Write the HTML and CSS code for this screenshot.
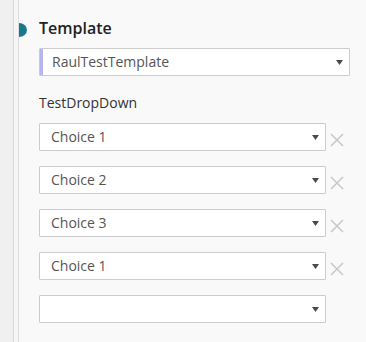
FILE: index.html
```html
<!DOCTYPE html>
<html>
<head>
<meta charset="utf-8">
<link rel="stylesheet" href="styles.css">
</head>
<body>
<div class="page">
  <div class="rail"></div>
  <div class="gutter"></div>
  <div class="panel">
    <span class="marker"></span>
    <h2 class="title">Template</h2>
    <div class="select select-template">
      <span class="accent"></span>
      <span class="value">RaulTestTemplate</span>
      <svg class="caret" width="7" height="5" viewBox="0 0 7 5"><polygon points="0,0 7,0 3.5,5" fill="#4a4a4a"/></svg>
    </div>
    <div class="label">TestDropDown</div>
    <div class="choices">
      <div class="choice-row">
        <div class="select select-choice"><span class="value">Choice 1</span><svg class="caret" width="7" height="5" viewBox="0 0 7 5"><polygon points="0,0 7,0 3.5,5" fill="#4a4a4a"/></svg></div>
        <svg class="remove" width="14" height="14" viewBox="0 0 14 14"><path d="M1 1L13 13M13 1L1 13" stroke="#c9c9c9" stroke-width="1.6" fill="none"/></svg>
      </div>
      <div class="choice-row">
        <div class="select select-choice"><span class="value">Choice 2</span><svg class="caret" width="7" height="5" viewBox="0 0 7 5"><polygon points="0,0 7,0 3.5,5" fill="#4a4a4a"/></svg></div>
        <svg class="remove" width="14" height="14" viewBox="0 0 14 14"><path d="M1 1L13 13M13 1L1 13" stroke="#c9c9c9" stroke-width="1.6" fill="none"/></svg>
      </div>
      <div class="choice-row">
        <div class="select select-choice"><span class="value">Choice 3</span><svg class="caret" width="7" height="5" viewBox="0 0 7 5"><polygon points="0,0 7,0 3.5,5" fill="#4a4a4a"/></svg></div>
        <svg class="remove" width="14" height="14" viewBox="0 0 14 14"><path d="M1 1L13 13M13 1L1 13" stroke="#c9c9c9" stroke-width="1.6" fill="none"/></svg>
      </div>
      <div class="choice-row">
        <div class="select select-choice"><span class="value">Choice 1</span><svg class="caret" width="7" height="5" viewBox="0 0 7 5"><polygon points="0,0 7,0 3.5,5" fill="#4a4a4a"/></svg></div>
        <svg class="remove" width="14" height="14" viewBox="0 0 14 14"><path d="M1 1L13 13M13 1L1 13" stroke="#c9c9c9" stroke-width="1.6" fill="none"/></svg>
      </div>
      <div class="choice-row">
        <div class="select select-choice"><span class="value"></span><svg class="caret" width="7" height="5" viewBox="0 0 7 5"><polygon points="0,0 7,0 3.5,5" fill="#4a4a4a"/></svg></div>
      </div>
    </div>
  </div>
</div>
</body>
</html>
```
FILE: styles.css
```css
html, body {
  margin: 0;
  padding: 0;
}
body {
  background: #f9f9f9;
  font-family: "Open Sans", "Liberation Sans", sans-serif;
}
.page {
  display: flex;
  height: 342px;
  overflow: hidden;
}
.rail {
  width: 13px;
  background: #f0f0f0;
  border-right: 1px solid #d9d9d9;
}
.gutter {
  width: 4px;
  background: #f6f6f6;
  border-right: 1px solid #dcdcdc;
}
.panel {
  position: relative;
  flex: 1;
  padding: 17px 0 0 20px;
  background: #f9f9f9;
}
.marker {
  position: absolute;
  left: 0;
  top: 23px;
  width: 8px;
  height: 14px;
  background: #19798a;
  border-radius: 0 8px 8px 0 / 0 7px 7px 0;
}
.title {
  margin: 0;
  font-size: 16px;
  line-height: 22px;
  font-weight: 600;
  color: #222;
}
.select {
  position: relative;
  display: flex;
  align-items: center;
  box-sizing: border-box;
  height: 28px;
  background: #fff;
  border: 1px solid #cccccc;
  border-radius: 1px;
  padding: 0 6px 0 11px;
  font-size: 14px;
  color: #555;
}
.select-template {
  margin-top: 9px;
  width: 311px;
  padding-left: 12px;
}
.accent {
  position: absolute;
  left: 0;
  top: 0;
  bottom: 0;
  width: 3px;
  background: #b5b5f3;
}
.value {
  flex: 1;
  line-height: 20px;
}
.caret {
  display: block;
  flex: none;
}
.label {
  margin-top: 17px;
  font-size: 14px;
  line-height: 20px;
  color: #333;
}
.choices {
  margin-top: 10px;
  display: flex;
  flex-direction: column;
  gap: 15px;
}
.choice-row {
  display: flex;
  align-items: flex-start;
}
.select-choice {
  width: 287px;
}
.remove {
  display: block;
  margin: 10px 0 0 4px;
}
```
